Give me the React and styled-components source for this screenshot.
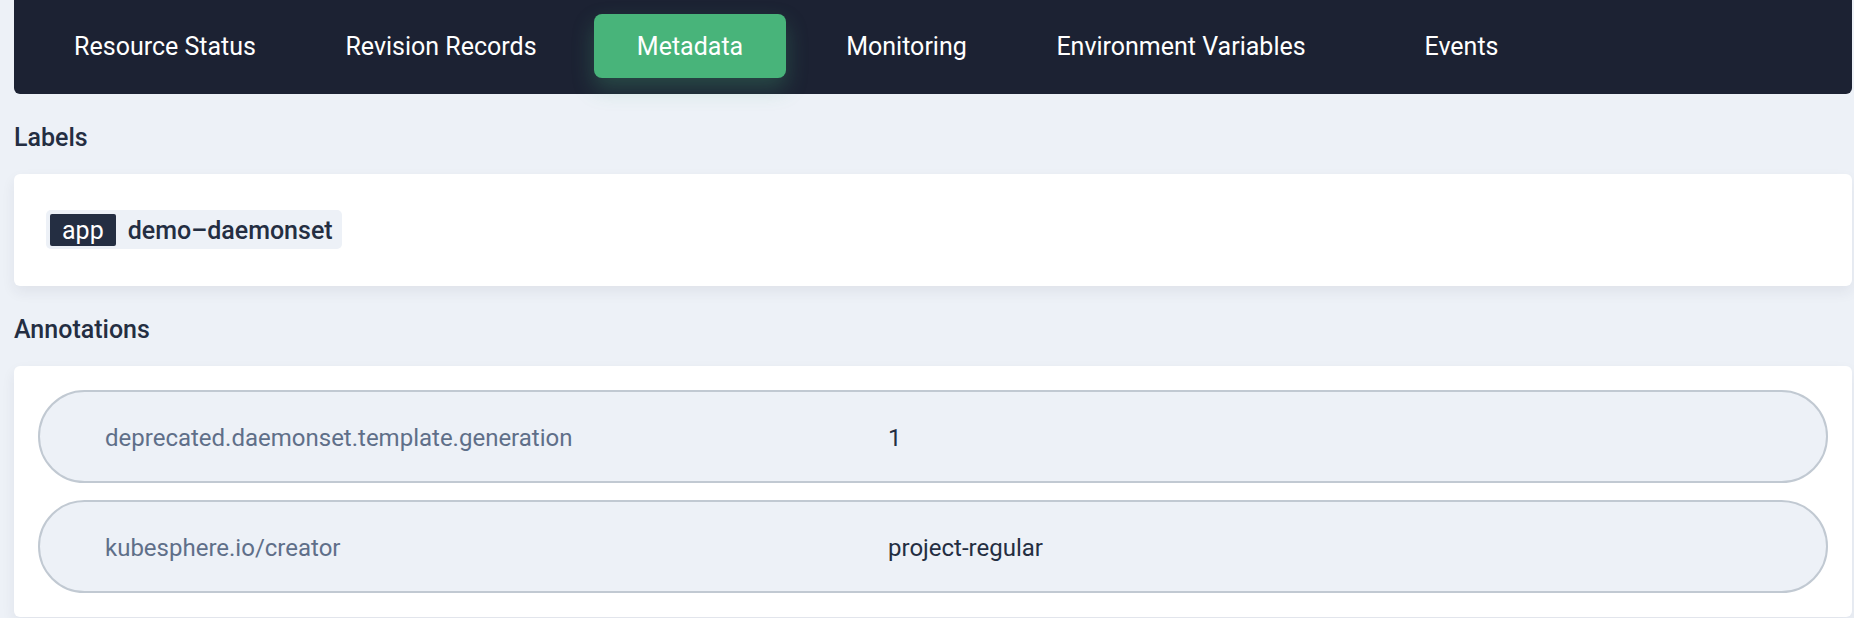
import React, { useState } from 'react'
import styled, { createGlobalStyle } from 'styled-components'

const GlobalStyle = createGlobalStyle`
    html, body {
        margin: 0;
        padding: 0;
        background: #edf1f7;
        font-family: Roboto, "Noto Sans", "Liberation Sans", sans-serif;
        -webkit-font-smoothing: antialiased;
    }
`

const tabs = [
    { label: 'Resource Status', w: 272, ml: 15 },
    { label: 'Revision Records', w: 280, ml: 0 },
    { label: 'Metadata', w: 192, ml: 13 },
    { label: 'Monitoring', w: 207, ml: 17 },
    { label: 'Environment Variables', w: 334, ml: 4 },
    { label: 'Events', w: 159, ml: 34 },
]

const labels = [{ key: 'app', value: 'demo–daemonset' }]

const annotations = [
    { key: 'deprecated.daemonset.template.generation', value: '1' },
    { key: 'kubesphere.io/creator', value: 'project-regular' },
]

function App() {
    const [active, setActive] = useState('Metadata')

    return (
        <Page>
            <GlobalStyle />
            <TabBar>
                {tabs.map(t => (
                    <Tab
                        key={t.label}
                        $w={t.w}
                        $ml={t.ml}
                        $active={active === t.label}
                        onClick={() => setActive(t.label)}
                    >
                        {t.label}
                    </Tab>
                ))}
            </TabBar>

            <SectionTitle>Labels</SectionTitle>
            <LabelCard>
                {labels.map(l => (
                    <Tag key={l.key}>
                        <TagKey>{l.key}</TagKey>
                        <TagValue>{l.value}</TagValue>
                    </Tag>
                ))}
            </LabelCard>

            <SectionTitle>Annotations</SectionTitle>
            <AnnotationCard>
                {annotations.map(a => (
                    <Row key={a.key}>
                        <RowKey>{a.key}</RowKey>
                        <RowValue>{a.value}</RowValue>
                    </Row>
                ))}
            </AnnotationCard>
        </Page>
    )
}

export default App


const Page = styled.div`
    padding: 0 2px 0 14px;
    min-height: 618px;
    box-sizing: border-box;
`

const TabBar = styled.div`
    height: 94px;
    display: flex;
    align-items: center;
    background: #1c2233;
    border-radius: 0 0 6px 6px;
`

const Tab = styled.div`
    flex: 0 0 ${p => p.$w}px;
    margin-left: ${p => p.$ml}px;
    height: 64px;
    margin-top: -2px;
    display: flex;
    align-items: center;
    justify-content: center;
    border-radius: 8px;
    color: #ffffff;
    font-size: 25px;
    font-weight: 400;
    white-space: nowrap;
    cursor: pointer;
    background: ${p => p.$active ? '#48b47a' : 'transparent'};
    box-shadow: ${p => p.$active ? '0 10px 22px rgba(72, 180, 122, 0.28)' : 'none'};
`

const SectionTitle = styled.div`
    margin: 26px 0 18px;
    line-height: 36px;
    font-size: 25px;
    font-weight: 500;
    color: #242e42;
`

const Card = styled.div`
    background: #ffffff;
    border-radius: 6px;
    box-shadow: 0 6px 14px rgba(36, 46, 66, 0.07);
`

const LabelCard = styled(Card)`
    height: 112px;
    box-sizing: border-box;
    padding: 36px 32px 0;
    display: flex;
    align-items: flex-start;
`

const Tag = styled.div`
    display: flex;
    align-items: center;
    height: 39px;
    box-sizing: border-box;
    padding: 4px 9px 3px 4px;
    background: #edf1f7;
    border-radius: 5px;
`

const TagKey = styled.span`
    height: 32px;
    padding: 0 12px;
    display: flex;
    align-items: center;
    background: #242e42;
    border-radius: 2px;
    color: #ffffff;
    font-size: 25px;
`

const TagValue = styled.span`
    margin-left: 12px;
    color: #242e42;
    font-size: 25px;
    font-weight: 500;
`

const AnnotationCard = styled(Card)`
    padding: 24px;
    display: flex;
    flex-direction: column;
    gap: 17px;
`

const Row = styled.div`
    height: 93px;
    box-sizing: border-box;
    padding: 3px 65px 0;
    display: flex;
    align-items: center;
    background: #edf1f7;
    border: 2px solid #c1c9d2;
    border-radius: 47px;
    font-size: 24px;
`

const RowKey = styled.div`
    flex: 0 0 783px;
    color: #5f6f89;
`

const RowValue = styled.div`
    color: #242e42;
`
